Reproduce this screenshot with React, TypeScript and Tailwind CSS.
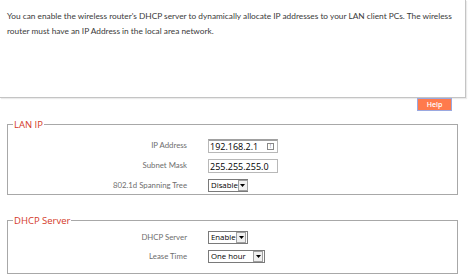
import React from "react";

const font = { fontFamily: '"Open Sans", "Noto Sans", sans-serif' };
const lato = { fontFamily: 'Lato, "Open Sans", sans-serif' };

function Arrow() {
  return (
    <span className="flex h-[11px] w-[10px] shrink-0 items-center justify-center border border-[#a0a0a0] bg-[#f0f0f0]">
      <svg width="5" height="3" viewBox="0 0 5 3">
        <path d="M0 0h5L2.5 3z" fill="#000" />
      </svg>
    </span>
  );
}

function Select({ value, width }: { value: string; width: string }) {
  return (
    <div
      className={`flex h-[13px] items-center justify-between border border-[#7a7a7a] bg-white pl-[2px] pr-[1px] text-[7.8px] leading-none text-black ${width}`}
    >
      <span>{value}</span>
      <Arrow />
    </div>
  );
}

function Row({ label, h, children }: { label: string; h: string; children: React.ReactNode }) {
  return (
    <div className={`flex items-center ${h}`}>
      <div className="w-[179px] text-right text-[7.8px] text-[#6e6e6e]" style={lato}>
        {label}
      </div>
      <div className="ml-[21px]">{children}</div>
    </div>
  );
}

export default function App() {
  return (
    <div className="h-[278px] w-[468px] overflow-hidden bg-white" style={font}>
      <div
        className="h-[98px] w-[466px] border-b border-r border-[#c4c4c4] pl-[7px] pt-[9px] text-[8.3px] leading-[15px] text-[#3a3a3a] shadow-[1px_1px_1px_rgba(0,0,0,0.08)]"
        style={lato}
      >
        You can enable the wireless router's DHCP server to dynamically allocate IP addresses to your LAN client PCs. The wireless
        router must have an IP Address in the local area network.
      </div>

      <div className="flex justify-end pr-[16px]">
        <button className="h-[13px] w-[35px] border border-[#9aa8e0] bg-[#ff7a4c] text-[7px] font-semibold leading-none text-white">
          Help
        </button>
      </div>

      <fieldset className="ml-[7px] mt-[7px] h-[77px] w-[451px] border border-[#a8a8a8] px-0 pb-0 pt-[5px]">
        <legend className="ml-[5px] px-[1px] text-[9.5px] leading-[13px] text-[#d43a2a]">LAN IP</legend>
        <Row label="IP Address" h="h-[20px]">
          <div className="flex h-[14px] w-[70px] items-center justify-between border border-t-2 border-[#b8b8b8] border-t-[#a0a0a0] px-[1px] text-[9px] leading-none text-black">
            <span>192.168.2.1</span>
            <span className="mr-[2px] flex h-[7px] w-[7px] items-center justify-center border border-[#888] text-[5px] leading-none text-[#555]">
              !
            </span>
          </div>
        </Row>
        <Row label="Subnet Mask" h="h-[20px]">
          <div className="flex h-[14px] w-[70px] items-center border border-[#b8b8b8] px-[1px] text-[9px] leading-none text-black">
            255.255.255.0
          </div>
        </Row>
        <Row label="802.1d Spanning Tree" h="h-[19px]">
          <Select value="Disable" width="w-[40px]" />
        </Row>
      </fieldset>

      <fieldset className="ml-[7px] mt-[19px] h-[60px] w-[451px] border border-[#a8a8a8] px-0 pb-0 pt-[1px]">
        <legend className="ml-[5px] px-[1px] text-[9.5px] leading-[13px] text-[#d43a2a]">DHCP Server</legend>
        <Row label="DHCP Server" h="h-[19px]">
          <Select value="Enable" width="w-[40px]" />
        </Row>
        <Row label="Lease Time" h="h-[19px]">
          <Select value="One hour" width="w-[57px]" />
        </Row>
      </fieldset>
    </div>
  );
}
